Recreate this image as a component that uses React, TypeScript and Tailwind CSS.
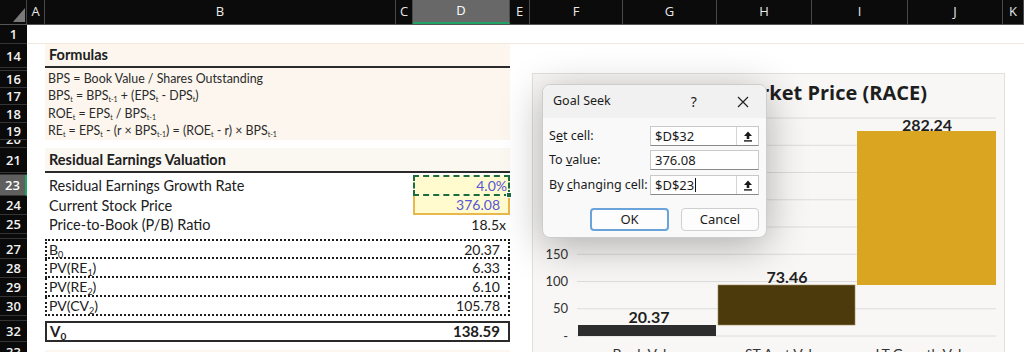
import React from 'react';

const cols = [
  { l: 'A', w: 'w-[18px]' },
  { l: 'B', w: 'w-[351px]' },
  { l: 'C', w: 'w-[17px]' },
  { l: 'D', w: 'w-[97px]', sel: true },
  { l: 'E', w: 'w-[20px]' },
  { l: 'F', w: 'w-[93px]' },
  { l: 'G', w: 'w-[94px]' },
  { l: 'H', w: 'w-[95px]' },
  { l: 'I', w: 'w-[96px]' },
  { l: 'J', w: 'w-[95px]' },
  { l: 'K', w: 'flex-1' },
];

function Sub({ children }: { children: React.ReactNode }) {
  return <sub className="text-[7px] -bottom-[2px]">{children}</sub>;
}

function Row({
  n,
  h,
  sel,
  clip,
  cls,
  children,
}: {
  n?: string;
  h: string;
  sel?: boolean;
  clip?: boolean;
  cls?: string;
  children?: React.ReactNode;
}) {
  return (
    <div className={`flex shrink-0 ${h}`}>
      <div
        className={`w-[27px] shrink-0 flex justify-center overflow-hidden border-b border-[#343434] font-['Open_Sans',sans-serif] text-[13px] font-semibold leading-[16px] ${
          clip ? 'items-end' : 'items-center'
        } ${sel ? 'bg-[#5f5f5f] text-white border-r-2 border-r-[#1fa463]' : 'bg-[#0a0a0a] text-[#f2f2f2]'}`}
      >
        {n}
      </div>
      <div className={`flex-1 flex min-w-0 ${cls ?? ''}`}>
        <div className="w-[18px] shrink-0" />
        {children}
      </div>
    </div>
  );
}

const dotRow = 'w-[465px] flex items-center justify-between pl-[2px] pr-[8px] text-[14px] border-dotted border-[#1c1c1c]';
const formula = 'w-[465px] bg-[#fcf6ee] flex items-center pl-[3px] text-[12.4px] text-[#2a2a2a]';

function UploadIcon() {
  return (
    <svg width="10" height="11" viewBox="0 0 10 11">
      <path d="M5 0.5 L9 5 H6.3 V8 H3.7 V5 H1 Z" fill="#1a1a1a" />
      <rect x="1" y="9.2" width="8" height="1.4" fill="#1a1a1a" />
    </svg>
  );
}

function GoalSeek() {
  return (
    <div className="absolute left-[542px] top-[84px] w-[225px] h-[154px] rounded-[8px] bg-[#f9f9f9] border border-[#cdcdcd] shadow-[0_8px_40px_rgba(0,0,0,0.3)] overflow-hidden font-['Noto_Sans',sans-serif] text-[#1b1b1b]">
      <div className="h-[33px] bg-[#f1f1f1] flex items-center pl-[10px] text-[12.5px]">
        <span>Goal Seek</span>
        <span className="ml-[80px] text-[14px]">?</span>
        <svg className="ml-[40px]" width="12" height="12" viewBox="0 0 12 12">
          <path d="M1 1 L11 11 M11 1 L1 11" stroke="#222" strokeWidth="1.2" />
        </svg>
      </div>
      <div className="flex flex-col pt-[8px] text-[12.5px]">
        <div className="flex items-center h-[20px]">
          <span className="pl-[6px] flex-1">
            S<u>e</u>t cell:
          </span>
          <div className="w-[109px] h-full mr-[7px] flex bg-white border border-[#c9c9c9] border-b-[#8a8a8a]">
            <span className="flex-1 pl-[4px] leading-[18px] text-[13px]">$D$32</span>
            <div className="w-[22px] flex items-center justify-center border-l border-[#d4d4d4]">
              <UploadIcon />
            </div>
          </div>
        </div>
        <div className="flex items-center h-[20px] mt-[4px]">
          <span className="pl-[6px] flex-1">
            To <u>v</u>alue:
          </span>
          <div className="w-[109px] h-full mr-[7px] flex bg-white border border-[#c9c9c9] border-b-[#8a8a8a]">
            <span className="flex-1 pl-[4px] leading-[18px] text-[13px]">376.08</span>
          </div>
        </div>
        <div className="flex items-center h-[20px] mt-[5px]">
          <span className="pl-[6px] flex-1">
            By <u>c</u>hanging cell:
          </span>
          <div className="w-[109px] h-full mr-[7px] flex bg-white border border-[#c9c9c9] border-b-[#8a8a8a]">
            <span className="flex-1 pl-[4px] leading-[18px] text-[13px] flex items-center">
              $D$23<span className="inline-block w-[1px] h-[14px] bg-[#111] ml-[1px]" />
            </span>
            <div className="w-[22px] flex items-center justify-center border-l border-[#d4d4d4]">
              <UploadIcon />
            </div>
          </div>
        </div>
        <div className="flex justify-end gap-[12px] pr-[7px] mt-[13px] text-[13px]">
          <div className="w-[79px] h-[23px] rounded-[4px] bg-[#fdfdfd] border-2 border-[#6aa3da] flex items-center justify-center">
            OK
          </div>
          <div className="w-[78px] h-[23px] rounded-[4px] bg-[#fdfdfd] border border-[#cfcfcf] flex items-center justify-center">
            Cancel
          </div>
        </div>
      </div>
    </div>
  );
}

function Chart() {
  const grid = [0, 1, 2, 3, 4, 5, 6, 7, 8].map((k) => 44 + k * 27.25);
  const ticks = ['400', '350', '300', '250', '200', '150', '100', '50', '-'];
  return (
    <div className="absolute left-[532px] top-[73px] w-[473px] h-[300px] bg-[#f8f7f5] border border-[#e0e0e0] font-['Lato',sans-serif]">
      <div className="pt-[5px] pr-[77px] text-right font-['Open_Sans',sans-serif] text-[20px] font-bold text-[#1e1e1e] leading-[28px]">
        Intrinsic Value vs. Market Price (RACE)
      </div>
      <svg className="absolute left-0 top-0" width="473" height="300" viewBox="0 0 473 300">
        {grid.map((y, i) => (
          <g key={i}>
            <line x1="44" x2="463" y1={y} y2={y} stroke="#dcdcdc" strokeWidth="1" />
            <text x="35" y={y + 4.5} textAnchor="end" fontSize="13" fill="#333">
              {ticks[i]}
            </text>
          </g>
        ))}
        <rect x="45" y="251" width="138" height="11" fill="#2d2d2d" />
        <rect x="185" y="211" width="137" height="40" fill="#4d3a0c" stroke="#9c8a5c" strokeWidth="0.6" />
        <rect x="324" y="57" width="139" height="154" fill="#daa520" />
        <g fontSize="16" fontWeight="700" fill="#1f1f1f" textAnchor="middle">
          <text x="116" y="249">20.37</text>
          <text x="254" y="209">73.46</text>
          <text x="394" y="56.5">282.24</text>
        </g>
        <g fontSize="14" fill="#333" textAnchor="middle">
          <text x="114" y="285">Book Value</text>
          <text x="253" y="285">ST Asst Value</text>
          <text x="393" y="285">LT Growth Value</text>
        </g>
      </svg>
    </div>
  );
}

export default function App() {
  return (
    <div className="relative w-[1024px] h-[352px] overflow-hidden bg-white font-['Lato',sans-serif] text-[#202020]">
      <div className="flex h-[25px] bg-[#0b0b0b] border-b border-[#555] font-['Open_Sans',sans-serif] text-[13px] text-[#e8e8e8]">
        <div className="w-[27px] shrink-0 relative border-r border-[#444]">
          <svg className="absolute left-[13px] top-[8px]" width="12" height="14" viewBox="0 0 12 14">
            <polygon points="12,0 12,14 0,14" fill="#7a7a7a" />
          </svg>
        </div>
        {cols.map((c) => (
          <div
            key={c.l}
            className={`${c.w} shrink-0 flex items-center justify-center border-r border-[#4a4a4a] ${
              c.sel ? 'bg-[#686868] border-b-2 border-b-[#21a366] text-white' : ''
            }`}
          >
            {c.l}
          </div>
        ))}
      </div>

      <div className="flex flex-col">
        <Row n="1" h="h-[19px]" cls="border-b border-[#f2e9dd]" />
        <Row n="14" h="h-[24px]">
          <div className="w-[465px] bg-[#fcf6ee] border-b-2 border-[#2b2b2b] flex items-center pl-[4px] text-[14.5px] font-bold">
            Formulas
          </div>
        </Row>
        <Row h="h-[3px]">
          <div className="w-[465px] bg-[#fcf6ee]" />
        </Row>
        <Row n="16" h="h-[17px]">
          <div className={formula}>BPS = Book Value / Shares Outstanding</div>
        </Row>
        <Row n="17" h="h-[17px]">
          <div className={formula}>
            <span>
              BPS<Sub>t</Sub> = BPS<Sub>t-1</Sub> + (EPS<Sub>t</Sub> - DPS<Sub>t</Sub>)
            </span>
          </div>
        </Row>
        <Row n="18" h="h-[18px]">
          <div className={formula}>
            <span>
              ROE<Sub>t</Sub> = EPS<Sub>t</Sub> / BPS<Sub>t-1</Sub>
            </span>
          </div>
        </Row>
        <Row n="19" h="h-[17px]">
          <div className={formula}>
            <span>
              RE<Sub>t</Sub> = EPS<Sub>t</Sub> - (r × BPS<Sub>t-1</Sub>) = (ROE<Sub>t</Sub> - r) × BPS<Sub>t-1</Sub>
            </span>
          </div>
        </Row>
        <Row n="20" h="h-[8px]" clip />
        <Row n="21" h="h-[25px]">
          <div className="w-[465px] bg-[#fbf7f1] border-b-2 border-[#2b2b2b] flex items-center pl-[4px] text-[14.5px] font-bold">
            Residual Earnings Valuation
          </div>
        </Row>
        <Row h="h-[2px]" />
        <Row n="23" h="h-[21px]" sel>
          <div className="w-[368px] flex items-center pl-[4px] text-[14.5px]">Residual Earnings Growth Rate</div>
          <div className="w-[97px] relative bg-[#fffbcf] border-2 border-dashed border-[#1d6b40] flex items-center justify-end pr-[1px] text-[14px] text-[#5656d8]">
            4.0%
            <span className="absolute -right-[4px] -bottom-[4px] w-[6px] h-[6px] bg-[#1d6b40] border border-white" />
          </div>
        </Row>
        <Row n="24" h="h-[19px]">
          <div className="w-[368px] flex items-center pl-[4px] text-[14.5px]">Current Stock Price</div>
          <div className="w-[97px] bg-[#fffbcf] border-2 border-t-0 border-[#e8b84c] flex items-center justify-end pr-[8px] text-[14px] text-[#5656d8]">
            376.08
          </div>
        </Row>
        <Row n="25" h="h-[19px]">
          <div className="w-[368px] flex items-center pl-[4px] text-[14.5px]">Price-to-Book (P/B) Ratio</div>
          <div className="w-[97px] flex items-center justify-end pr-[4px] text-[14px]">18.5x</div>
        </Row>
        <Row h="h-[5px]" />
        <Row n="27" h="h-[20px]">
          <div className={`${dotRow} border-2`}>
            <span>
              B<sub className="text-[9px] -bottom-[3px]">0</sub>
            </span>
            <span>20.37</span>
          </div>
        </Row>
        <Row n="28" h="h-[19px]">
          <div className={`${dotRow} border-x-2 border-b-2`}>
            <span>
              PV(RE<sub className="text-[9px] -bottom-[3px]">1</sub>)
            </span>
            <span>6.33</span>
          </div>
        </Row>
        <Row n="29" h="h-[19px]">
          <div className={`${dotRow} border-x-2 border-b-2`}>
            <span>
              PV(RE<sub className="text-[9px] -bottom-[3px]">2</sub>)
            </span>
            <span>6.10</span>
          </div>
        </Row>
        <Row n="30" h="h-[19px]">
          <div className={`${dotRow} border-x-2 border-b-2`}>
            <span>
              PV(CV<sub className="text-[9px] -bottom-[3px]">2</sub>)
            </span>
            <span>105.78</span>
          </div>
        </Row>
        <Row h="h-[5px]" />
        <Row n="32" h="h-[21px]">
          <div className="w-[465px] border-2 border-[#2a2a2a] flex items-center justify-between pl-[3px] pr-[8px] text-[15px] font-bold">
            <span>
              V<sub className="text-[10px] -bottom-[3px]">0</sub>
            </span>
            <span>138.59</span>
          </div>
        </Row>
        <Row n="33" h="h-[20px]">
          <div className="w-[465px] pt-[8px]">
            <div className="h-full bg-[#fcf6ee]" />
          </div>
        </Row>
      </div>

      <Chart />
      <GoalSeek />
    </div>
  );
}
